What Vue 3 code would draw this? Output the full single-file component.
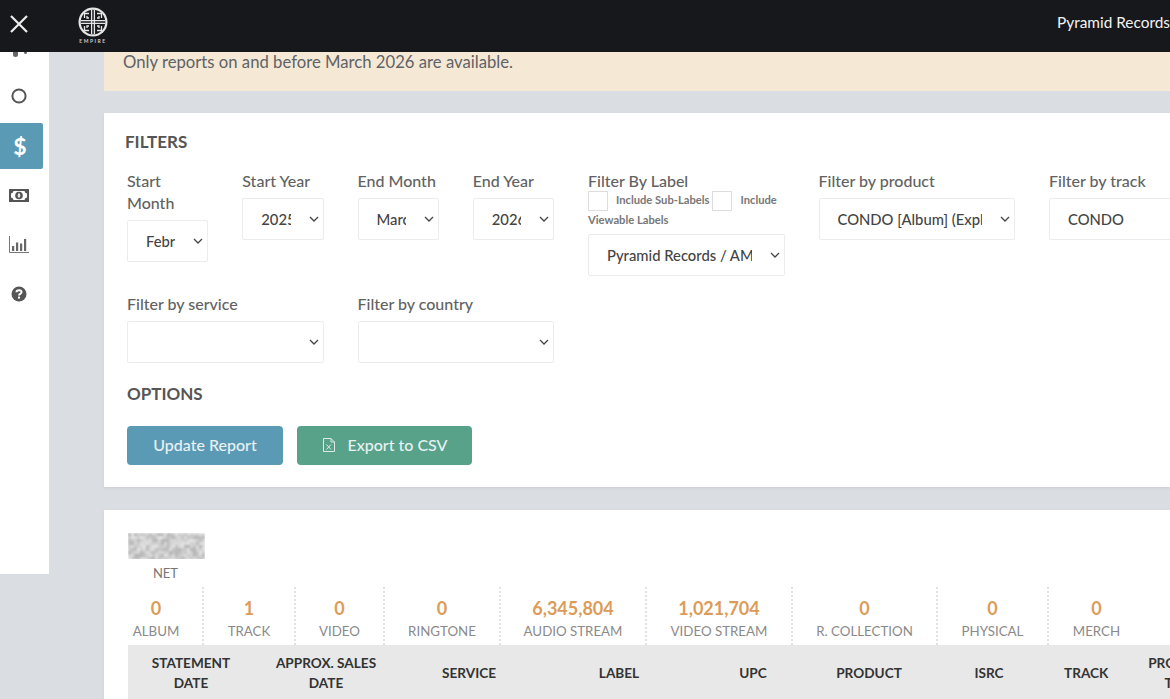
<script setup>
const topFilters = [
  { label: "Start Month", value: "February" },
  { label: "Start Year", value: "2025" },
  { label: "End Month", value: "March" },
  { label: "End Year", value: "2026" },
];

const stats = [
  { value: "0", label: "ALBUM", width: 76 },
  { value: "1", label: "TRACK", width: 92 },
  { value: "0", label: "VIDEO", width: 89 },
  { value: "0", label: "RINGTONE", width: 116 },
  { value: "6,345,804", label: "AUDIO STREAM", width: 146 },
  { value: "1,021,704", label: "VIDEO STREAM", width: 146 },
  { value: "0", label: "R. COLLECTION", width: 145 },
  { value: "0", label: "PHYSICAL", width: 111 },
  { value: "0", label: "MERCH", width: 95 },
];

const columns = [
  "STATEMENT DATE",
  "APPROX. SALES DATE",
  "SERVICE",
  "LABEL",
  "UPC",
  "PRODUCT",
  "ISRC",
  "TRACK",
  "PRODUCT TYPE",
];

// the redacted amount, a fixed noise of grey cells
const noise = Array.from({ length: 234 }, (_, i) => {
  const hash = Math.abs(Math.sin(i * 12.9898) * 43758.5453) % 1;
  const shade = Math.round(178 + hash * 52);
  return `rgb(${shade},${shade},${shade})`;
});
</script>

<template>
  <div class="page">
    <header class="topbar">
      <svg class="close" viewBox="0 0 20 20" width="20" height="20">
        <path d="M2 2 18 18M18 2 2 18" />
      </svg>
      <div class="logo">
        <svg viewBox="0 0 30 30" width="30" height="30">
          <circle cx="15" cy="15" r="14.500" fill="#e6e6e6" />
          <circle cx="15" cy="15" r="12.300" fill="#17181c" />
          <g fill="none" stroke="#e6e6e6" stroke-width="1.300">
            <path d="M13.600 3v24M16.400 3v24M3 13.600h24M3 16.400h24" />
            <path d="M11 6.500H6.500V11M11 11H9V9M19 6.500h4.500V11M19 11h2V9M11 23.500H6.500V19M11 19H9v2M19 23.500h4.500V19M19 19h2v2" />
          </g>
        </svg>
        <span>EMPIRE</span>
      </div>
      <div class="account">Pyramid Records</div>
    </header>

    <div class="body">
      <nav class="sidebar">
        <div class="nav-clipped">
          <svg viewBox="0 0 14 5" width="14" height="5">
            <path d="M0 0h5v2.500a2.500 2.500 0 0 1-5 0zM11 0h3v.6a1.500 1.500 0 0 1-3 0z" fill="#666" />
          </svg>
        </div>
        <div class="nav-item">
          <svg viewBox="0 0 16 16" width="16" height="16">
            <circle cx="8" cy="8" r="6.600" fill="none" stroke="#555" stroke-width="2" />
          </svg>
        </div>
        <div class="nav-item active">$</div>
        <div class="nav-item">
          <svg viewBox="0 0 20 13" width="20" height="13">
            <rect width="20" height="13" rx=".5" fill="#555" />
            <path d="M4.500 2h11a3 3 0 0 0 2.500 2.500v4A3 3 0 0 0 15.500 11h-11A3 3 0 0 0 2 8.500v-4A3 3 0 0 0 4.500 2z" fill="#fff" />
            <circle cx="10" cy="6.500" r="3.800" fill="#555" />
            <ellipse cx="10" cy="6.500" rx="1.300" ry="2.200" fill="#e8e8e8" />
          </svg>
        </div>
        <div class="nav-item">
          <svg viewBox="0 0 20 17" width="20" height="17">
            <path d="M.5 0v16.500H20" fill="none" stroke="#777" stroke-width="1" />
            <path d="M3 10h2.200v5H3zM7 6.500h2.200V15H7zM11 7.500h2.200V15H11zM15 3h2.200v12H15z" fill="#666" />
          </svg>
        </div>
        <div class="nav-item">
          <svg viewBox="0 0 16 16" width="16" height="16">
            <circle cx="8" cy="8" r="7.500" fill="#555" />
            <path d="M5.400 6.200C5.500 3.600 10.600 3.500 10.600 6.100 10.600 7.900 8 7.800 8 9.400" fill="none" stroke="#fff" stroke-width="1.900" />
            <rect x="7" y="10.600" width="2" height="2" fill="#fff" />
          </svg>
        </div>
      </nav>

      <main class="main">
        <div class="alert">Only reports on and before March 2026 are available.</div>

        <section class="card filters">
          <h2>FILTERS</h2>
          <div class="filter-grid">
            <div v-for="f in topFilters" :key="f.label" class="field">
              <label>{{ f.label }}</label>
              <div class="select-wrap">
                <select><option>{{ f.value }}</option></select>
                <svg class="chevron" viewBox="0 0 10 6" width="10" height="6"><path d="M1 1l4 4 4-4" /></svg>
              </div>
            </div>

            <div class="field span-2">
              <label>Filter By Label</label>
              <div class="label-opts">
                <input type="checkbox" /><span class="opt-first">Include Sub-Labels</span><input type="checkbox" /><span class="opt-second">Include</span> <span>Viewable Labels</span>
              </div>
              <div class="select-wrap">
                <select><option>Pyramid Records / AMWAY</option></select>
                <svg class="chevron" viewBox="0 0 10 6" width="10" height="6"><path d="M1 1l4 4 4-4" /></svg>
              </div>
            </div>

            <div class="field span-2">
              <label>Filter by product</label>
              <div class="select-wrap">
                <select><option>CONDO [Album] (Explicit)</option></select>
                <svg class="chevron" viewBox="0 0 10 6" width="10" height="6"><path d="M1 1l4 4 4-4" /></svg>
              </div>
            </div>

            <div class="field span-2">
              <label>Filter by track</label>
              <div class="select-wrap">
                <select><option>CONDO</option></select>
                <svg class="chevron" viewBox="0 0 10 6" width="10" height="6"><path d="M1 1l4 4 4-4" /></svg>
              </div>
            </div>

            <div class="field span-2 row-start">
              <label>Filter by service</label>
              <div class="select-wrap">
                <select></select>
                <svg class="chevron" viewBox="0 0 10 6" width="10" height="6"><path d="M1 1l4 4 4-4" /></svg>
              </div>
            </div>

            <div class="field span-2">
              <label>Filter by country</label>
              <div class="select-wrap">
                <select></select>
                <svg class="chevron" viewBox="0 0 10 6" width="10" height="6"><path d="M1 1l4 4 4-4" /></svg>
              </div>
            </div>
          </div>

          <h2 class="options-title">OPTIONS</h2>
          <div class="buttons">
            <button class="btn update">Update Report</button>
            <button class="btn export">
              <svg viewBox="0 0 12 14" width="12" height="14">
                <path d="M.5.500h7.500l3.500 3.500v9.500H.5zM8 .5V4h3.500" fill="none" stroke="#dcebe5" />
                <path d="M3.500 6.500l4.500 5M8 6.500l-4.500 5" stroke="#dcebe5" />
              </svg>
              Export to CSV
            </button>
          </div>
        </section>

        <section class="card report">
          <div class="net">
            <div class="redacted">
              <div class="redacted-noise">
                <i v-for="(c, i) in noise" :key="i" :style="{ background: c }"></i>
              </div>
            </div>
            <div class="net-label">NET</div>
          </div>

          <div class="stats">
            <div v-for="s in stats" :key="s.label" class="stat" :style="{ width: s.width + 'px' }">
              <div class="stat-value">{{ s.value }}</div>
              <div class="stat-label">{{ s.label }}</div>
            </div>
          </div>

          <div class="table-head">
            <div v-for="c in columns" :key="c" class="th">{{ c }}</div>
          </div>
        </section>
      </main>
    </div>
  </div>
</template>

<style>
html,
body {
  margin: 0;
  overflow: hidden;
  background: #dadee2;
}
</style>

<style scoped>
.page {
  width: 1170px;
  height: 699px;
  overflow: hidden;
  font-family: Lato, "Open Sans", sans-serif;
  color: #666;
  background: #dadee2;
}

.topbar {
  height: 52px;
  box-sizing: border-box;
  background: #17181c;
  display: flex;
  align-items: center;
  padding: 0 0 4px 9px;
  position: relative;
}
.close {
  stroke: #eee;
  stroke-width: 2.200;
  fill: none;
}
.logo {
  margin: 3px 0 0 48px;
  width: 32px;
  display: flex;
  flex-direction: column;
  align-items: center;
  color: #ccc;
}
.logo span {
  font-size: 5px;
  font-weight: 700;
  letter-spacing: 1.500px;
  line-height: 6px;
  margin-top: 1px;
  white-space: nowrap;
}
.account {
  margin-left: auto;
  width: 113px;
  margin-top: -4px;
  white-space: nowrap;
  overflow: hidden;
  color: #f2f2f2;
  font-size: 15.400px;
}

.body {
  display: flex;
  align-items: flex-start;
}

.sidebar {
  width: 49px;
  height: 522px;
  background: #fff;
  flex: none;
}
.nav-clipped {
  height: 19.500px;
  padding-left: 13px;
}
.nav-clipped svg {
  display: block;
}
.nav-item {
  width: 38px;
  height: 49.500px;
  display: flex;
  align-items: center;
  justify-content: center;
}
.nav-item.active {
  width: 43px;
  height: 46px;
  margin: 2px 0 1.500px;
  padding-right: 3px;
  box-sizing: border-box;
  background: #5b9ab5;
  color: #fff;
  border-radius: 0 2px 2px 0;
  font-size: 23px;
  font-weight: 700;
}

.main {
  flex: 1;
  margin-left: 55px;
  min-width: 0;
}

.alert {
  height: 39px;
  box-sizing: border-box;
  padding-left: 19px;
  line-height: 20px;
  font-size: 16.700px;
  color: #5f6266;
  background: #f5e9d6;
}

.card {
  background: #fff;
  box-shadow: 0 1px 3px rgba(0, 0, 0, 0.08);
}

.filters {
  margin-top: 22px;
  height: 374px;
  box-sizing: border-box;
  padding: 19px 0 0 21px;
}
h2 {
  margin: 0;
  font-size: 17px;
  line-height: 20px;
  font-weight: 700;
  color: #555;
}
.filter-grid {
  margin: 18px 0 0 2px;
  display: grid;
  grid-template-columns: repeat(12, 81.250px);
  column-gap: 34px;
  row-gap: 17px;
  align-items: start;
}
.field {
  min-width: 0;
}
.span-2 {
  grid-column: span 2;
}
.row-start {
  grid-column: 1 / span 2;
}
.field label {
  display: block;
  font-size: 16px;
  line-height: 22px;
  font-weight: 500;
  color: #626262;
}
.select-wrap {
  position: relative;
  margin-top: 6px;
}
select {
  appearance: none;
  display: block;
  width: 100%;
  height: 42px;
  box-sizing: border-box;
  padding: 0 32px 0 18px;
  border: 1px solid #ececec;
  border-radius: 2px;
  background: #fff;
  font: 500 14.800px Lato, sans-serif;
  color: #444;
}
.chevron {
  position: absolute;
  right: 5px;
  top: 18px;
  fill: none;
  stroke: #444;
  stroke-width: 1.300;
  pointer-events: none;
}
.label-opts {
  font-size: 11.200px;
  line-height: 18px;
  font-weight: 700;
  color: #777;
  margin-top: -1px;
  height: 37px;
}
.label-opts input {
  appearance: none;
  width: 20px;
  height: 20px;
  margin: 0;
  border: 1px solid #ddd;
  background: #fff;
  vertical-align: top;
}
.opt-first {
  margin: 0 3px 0 8px;
}
.opt-second {
  margin-left: 8px;
}

.options-title {
  margin: 21px 0 0 2px;
}
.buttons {
  margin: 22px 0 0 2px;
  display: flex;
  gap: 14px;
}
.btn {
  height: 39px;
  border: none;
  border-radius: 4px;
  font: 500 16px Lato, sans-serif;
  color: #e9f1f4;
  display: flex;
  align-items: center;
  justify-content: center;
  gap: 12px;
  padding: 0 0 2px;
}
.update {
  width: 156px;
  background: #5b9ab5;
}
.export {
  width: 175px;
  padding-left: 2px;
  background: #57a288;
}

.report {
  margin-top: 23px;
  padding: 23px 0 0 24px;
  height: 220px;
  box-sizing: border-box;
}
.net {
  width: 77px;
}
.redacted {
  height: 26px;
  overflow: hidden;
}
.redacted-noise {
  height: 27px;
  display: grid;
  grid-template-columns: repeat(26, 1fr);
  grid-auto-rows: 3px;
  filter: blur(0.9px);
}
.net-label {
  margin-top: 6px;
  margin-left: -2px;
  line-height: 16px;
  font-size: 13px;
  text-align: center;
  color: #777;
}

.stats {
  display: flex;
  margin-top: 6px;
  height: 58px;
}
.stat {
  flex: none;
  box-sizing: border-box;
  border-right: 2px dotted #e2e2e2;
  text-align: center;
}
.stat:first-child {
  padding-right: 18px;
}
.stat:last-child {
  border-right: none;
}
.stat-value {
  margin-top: 10px;
  line-height: 22px;
  font-size: 18px;
  font-weight: 700;
  color: #dc9c58;
}
.stat-label {
  margin-top: 2px;
  line-height: 20px;
  font-size: 13.300px;
  color: #8a8a8a;
  white-space: nowrap;
}

.table-head {
  display: grid;
  grid-template-columns: 126px 144px 142px 158px 110px 122px 118px 76px 114px;
  width: 1110px;
  height: 54px;
  box-sizing: border-box;
  padding-top: 2px;
  background: #e8e8e8;
  align-items: center;
}
.th {
  padding: 0 16px;
  text-align: center;
  font-size: 13.600px;
  line-height: 20px;
  font-weight: 700;
  color: #333;
}
</style>
